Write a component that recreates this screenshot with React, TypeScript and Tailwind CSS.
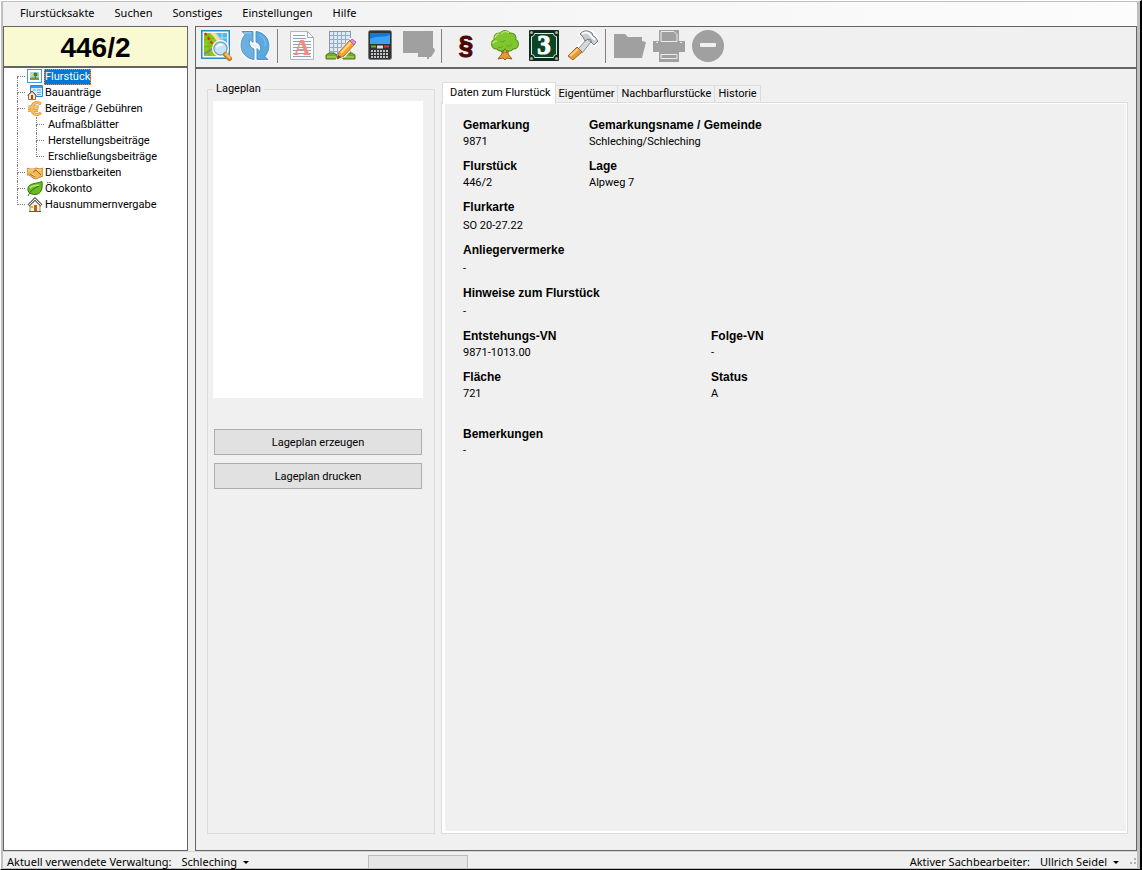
import { useState } from "react"
import type { ReactNode } from "react"

type TreeNode = {
  label: string;
  icon?: ReactNode;
  child?: boolean;
}

type Tool = {
  label: string;
  icon: ReactNode;
  disabled?: boolean;
}

const line = "border-dotted border-[#808080]"

function MapIcon() {
  return (
    <svg width="32" height="32" viewBox="0 0 32 32">
      <rect x="1" y="0" width="29" height="29" fill="#2a88c4" />
      <rect x="2.500" y="1.500" width="26" height="26" fill="#f4fbff" />
      <rect x="4" y="3" width="23" height="23" fill="#6cc6f2" />
      <path d="M18 3h9v23h-4z" fill="#53b8ee" />
      <path d="M22 3v23M18 8h9M18 14h9" stroke="#a9e0fa" />
      <path d="M4 3h9c6 5 9 10 9 23H4z" fill="#8cc914" />
      <path d="M10 3h5c6 5 9 12 8 23h-3c0-10-3-17-10-23z" fill="#f7dfa8" />
      <path d="M4 10l10-2M4 17l13-2M9 4v22" stroke="#74b512" />
      <path d="M4 24l8-5 6-3" stroke="#7d8790" strokeWidth="1.500" fill="none" />
      <path d="M5 3l10 15" stroke="#e3231b" strokeWidth="2" strokeDasharray="3 2" />
      <circle cx="20.500" cy="18.500" r="7" fill="#b9e0fb" stroke="#fff" strokeWidth="3" />
      <circle cx="20.500" cy="18.500" r="6.500" fill="#c3e6fc" stroke="#8ea2b4" strokeWidth="1.500" />
      <path d="M16 18c1-4 5-5 8-3-2 0-5 1-8 3z" fill="#fff" />
      <path d="M25.500 24.500l4 4" stroke="#c07a22" strokeWidth="5" strokeLinecap="round" />
      <path d="M26 24l3.500 3.500" stroke="#f6bf5c" strokeWidth="3" strokeLinecap="round" />
    </svg>
  )
}

function RefreshIcon() {
  const arrow = "M3 1.500h11v11l-3-3c-1.500 4-.5 7.500 4 9.500v10.500C3 28-2 15 6 4.500z"
  return (
    <svg width="32" height="32" viewBox="0 0 32 32" strokeLinejoin="round">
      <g fill="#fff" stroke="#fff" strokeWidth="3">
        <path d={arrow} />
        <path d={arrow} transform="rotate(180 16 15.500)" />
      </g>
      <g stroke="#4a93c8">
        <path d={arrow} fill="#6ab1e2" />
        <path d={arrow} fill="#5ba9de" transform="rotate(180 16 15.500)" />
      </g>
      <path d="M5 3h7" fill="none" stroke="#9dd0f0" />
      <path d="M20 5c5 2 7 6 6 11" fill="none" stroke="#8ac5ec" />
    </svg>
  )
}

function DocumentIcon() {
  return (
    <svg width="32" height="32" viewBox="0 0 32 32">
      <path d="M4.500 1.500h17l6 6v22h-23z" fill="#f9fbfd" stroke="#b3b7ba" />
      <path d="M21.500 1.500v6h6z" fill="#fff" stroke="#a5a9ad" />
      <path d="M7 5.500h12M7 8.500h13M7 11.500h18M7 14.500h18M7 17.500h18M7 20.500h18M7 23.500h18M7 26.500h18" stroke="#8fa1b5" />
      <text x="16" y="25" textAnchor="middle" fontFamily="Liberation Serif, serif" fontWeight="bold" fontSize="23" fill="#f58a80">A</text>
    </svg>
  )
}

function SurveyIcon() {
  return (
    <svg width="32" height="32" viewBox="0 0 32 32">
      <rect x="4.500" y="1.500" width="21" height="24" fill="#dce9f6" stroke="#8a99aa" />
      <path d="M8.500 2v23M12.500 2v23M16.500 2v23M20.500 2v23M5 5.500h20M5 9.500h20M5 13.500h20M5 17.500h20M5 21.500h20" stroke="#94acc8" />
      <path d="M1 29v-4l3-2h5l3 2v4zM18 29v-4l3-2h6l3 2v4z" fill="#77aa2b" stroke="#4f7b16" />
      <path d="M2 27h9M19 27h10" stroke="#99c94b" strokeWidth="2" />
      <path d="M12 29l3-8L26 9l5 4-11 13z" fill="#fff" stroke="#fff" strokeWidth="2" />
      <path d="M12 29l2-7 11-12 5 4-11 12z" fill="#f5a12b" stroke="#b86e1d" />
      <path d="M16 23l10-11" stroke="#ffd98b" strokeWidth="2" />
      <path d="M25 11l2-2 4 3-2 3z" fill="#d992cf" stroke="#a764a0" />
      <path d="M12 29l1-4 3 2z" fill="#6b4525" />
    </svg>
  )
}

function PhoneIcon() {
  return (
    <svg width="32" height="32" viewBox="0 0 32 32">
      <rect x="4.500" y=".5" width="23" height="29" rx="2" fill="#303234" stroke="#777b7e" />
      <rect x="6" y="3" width="20" height="11" fill="#1579d2" />
      <path d="M6 9c8-4 14-1 20-4v9H6z" fill="#3ea2ef" />
      <path d="M7 16.500h5" stroke="#5abb2c" strokeWidth="2" />
      <path d="M20 16.500h5" stroke="#e03a2b" strokeWidth="2" />
      <path d="M13 17h6" stroke="#dadddf" strokeWidth="3" />
      <path d="M7 21h18M7 24h18M7 27h18" stroke="#c2c5c7" strokeWidth="2" strokeDasharray="2 1" />
    </svg>
  )
}

function NoteIcon() {
  return (
    <svg width="32" height="32" viewBox="0 0 32 32" fill="#a0a0a0">
      <path d="M0 1h30v17h1l1 3-4 6h-2v2h-2v-2h-9v-4H0z" />
    </svg>
  )
}

function ParagraphIcon() {
  return (
    <svg width="32" height="32" viewBox="0 0 32 32">
      <text x="16" y="24" textAnchor="middle" fontFamily="Liberation Sans, sans-serif" fontWeight="bold" fontSize="26" fill="#4d0505" stroke="#4d0505">§</text>
    </svg>
  )
}

function TreeIcon() {
  return (
    <svg width="32" height="32" viewBox="0 0 32 32">
      <path d="M13 15h6v9l4 5-5-1-2 2-2-2-5 1 4-5z" fill="#e69b37" stroke="#9b5b16" />
      <path d="M10 18l5 5M22 18l-5 5" stroke="#b06b1f" strokeWidth="2" />
      <g fill="#4b9118">
        <circle cx="7.500" cy="14" r="5.500" />
        <circle cx="24.500" cy="14" r="5.500" />
        <circle cx="12" cy="16" r="5.500" />
        <circle cx="20" cy="16" r="5.500" />
        <circle cx="10" cy="8" r="5.500" />
        <circle cx="22" cy="8" r="5.500" />
        <circle cx="16" cy="6" r="6" />
      </g>
      <g fill="#80c62f">
        <circle cx="7.500" cy="14" r="4.500" />
        <circle cx="24.500" cy="14" r="4.500" />
        <circle cx="12" cy="16" r="4.500" />
        <circle cx="20" cy="16" r="4.500" />
        <circle cx="10" cy="8" r="4.500" />
        <circle cx="22" cy="8" r="4.500" />
        <circle cx="16" cy="6" r="5" />
        <circle cx="16" cy="12" r="6" />
      </g>
      <path d="M12 4c2-3 6-3 8-1M6 8c0-2 2-4 4-4M4 14c0-2 2-3 4-3" fill="none" stroke="#b6e667" strokeWidth="1.500" />
      <path d="M11 11c2 2 4 1 5-1M17 15c2 2 5 1 6-1M9 17c1 1 3 1 5-1" fill="none" stroke="#5ba51f" />
    </svg>
  )
}

function HouseNumberIcon() {
  return (
    <svg width="32" height="32" viewBox="0 0 32 32">
      <rect x="1" y="0" width="30" height="31" rx="1" fill="#0b2d1b" />
      <path d="M6.500 3.500h19c0 2 1 3 3 3v18c-2 0-3 1-3 3h-19c0-2-1-3-3-3v-18c2 0 3-1 3-3z" fill="#0b4426" stroke="#dce8df" />
      <g fill="#b7aaa0">
        <circle cx="3.500" cy="2.500" r="1.500" />
        <circle cx="28.500" cy="2.500" r="1.500" />
        <circle cx="3.500" cy="28.500" r="1.500" />
        <circle cx="28.500" cy="28.500" r="1.500" />
      </g>
      <text x="16" y="24" textAnchor="middle" fontFamily="Liberation Serif, serif" fontWeight="bold" fontSize="27" fill="#fff" stroke="#fff">3</text>
    </svg>
  )
}

function HammerIcon() {
  return (
    <svg width="32" height="32" viewBox="0 0 32 32" strokeLinejoin="round">
      <path d="M2 26L20 7l-8-2 4-4h9l3 4 3 6-3 5-5-4L7 30z" fill="#fff" stroke="#fff" strokeWidth="2" />
      <path d="M11 19L20 9l4 3-9 11z" fill="#d5d9dd" stroke="#858c94" />
      <path d="M1 26l9-9 5 5-9 8z" fill="#e69a35" stroke="#a2611b" />
      <path d="M3 26l8-7" stroke="#ffd188" strokeWidth="2" />
      <path d="M13 4c3-4 8-4 12-1l1 3 2 1 3 4-4 4-3-3v-2l-3-1-3 2-2-4z" fill="#c8cdd2" stroke="#737a83" />
      <path d="M15 4c3-2 6-2 8 1l5 5" fill="none" stroke="#f8fafc" strokeWidth="2" />
    </svg>
  )
}

function FolderIcon() {
  return (
    <svg width="32" height="32" viewBox="0 0 32 32" fill="#a0a0a0">
      <path d="M0 4h11l3 3h14v4l4 1-4 16H0z" />
    </svg>
  )
}

function PrinterIcon() {
  return (
    <svg width="32" height="32" viewBox="0 0 32 32">
      <path d="M6 0h20v11h6v11h-6v10H6V22H0V11h6z" fill="#a0a0a0" />
      <path d="M8 1.500h13l3 3v7H8zM8 24.500h16v4H8z" fill="#a0a0a0" stroke="#ededed" />
      <path d="M3 12.500h2M27 12.500h2" stroke="#ededed" />
    </svg>
  )
}

function MinusIcon() {
  return (
    <svg width="32" height="32" viewBox="0 0 32 32">
      <circle cx="16" cy="16" r="16" fill="#a0a0a0" />
      <rect x="8" y="13" width="16" height="4" rx="1" fill="#f0f0f0" />
    </svg>
  )
}

function PictureGlyph() {
  return (
    <svg width="16" height="16" viewBox="0 0 16 16">
      <rect x=".5" y=".5" width="14" height="13" fill="#fff" stroke="#39a0dc" />
      <rect x="3" y="3" width="9" height="8" fill="#9bd2f6" />
      <circle cx="5" cy="5" r="1.500" fill="#ffd84a" />
      <path d="M3 9c3-1 6-1 9 0v2H3z" fill="#7d9a2a" />
      <path d="M8.500 5v5" stroke="#a0681f" />
      <circle cx="8.500" cy="5.500" r="2" fill="#3f7f23" />
    </svg>
  )
}

function PermitGlyph() {
  return (
    <svg width="16" height="16" viewBox="0 0 16 16">
      <path d="M3.500.5h12v11h-12z" fill="#d8edfb" stroke="#2e86cc" />
      <path d="M4 2h11" stroke="#3b9ae0" strokeWidth="2" />
      <path d="M6 5h3M10 5h4M10 7.500h4M10 9.500h4" stroke="#5aaae4" />
      <path d="M1.500 10L5 6.500 8.500 10v4.500h-7z" fill="#fae7c7" stroke="#ab6b3c" />
      <path d="M.5 10.500L5 6l4.500 4.500" fill="none" stroke="#8c4b30" />
      <rect x="4" y="10" width="2" height="4" fill="#9b4b22" />
    </svg>
  )
}

function EuroGlyph() {
  return (
    <svg width="16" height="16" viewBox="0 0 16 16" fill="none">
      <path d="M14 3C9 0 5 2 5 7.500S9 15 14 12M1 6h11M1 9.500h10" stroke="#d08a30" strokeWidth="3" />
      <path d="M14 3C9 0 5 2 5 7.500S9 15 14 12M1 6h11M1 9.500h10" stroke="#f7bd62" strokeWidth="2" />
    </svg>
  )
}

function HandshakeGlyph() {
  return (
    <svg width="16" height="16" viewBox="0 0 16 16">
      <path d="M0 3l3 1 4 0 2-1 4 1 3-1v8l-3 1-4 2-3-1-4-3H0z" fill="#f4b758" stroke="#c58a3c" />
      <path d="M6 7l3-2 5 5M3 9l5 3" fill="none" stroke="#a3641c" />
      <path d="M1 5h6M10 5h4M5 9l3 2" stroke="#ffe4a8" />
    </svg>
  )
}

function LeafGlyph() {
  return (
    <svg width="16" height="16" viewBox="0 0 16 16">
      <path d="M15 .5c1 7.500-1 13-7 13-4 0-8-2-7-6.500C2 2 9 3 15 .5z" fill="#6cba22" stroke="#32790f" />
      <path d="M1 15c2-5 6-8 11-10" fill="none" stroke="#2e710e" />
      <path d="M3 7c2-3 6-2 9-3" fill="none" stroke="#b4e868" strokeWidth="1.500" />
    </svg>
  )
}

function HouseGlyph() {
  return (
    <svg width="16" height="16" viewBox="0 0 16 16">
      <path d="M3 7l5-5 5 5v7.500H3z" fill="#fdf0d5" stroke="#a58462" />
      <path d="M1.500 8.500L8 2l6.500 6.500" fill="none" stroke="#666" strokeWidth="3" />
      <path d="M1.500 8.500L8 2l6.500 6.500" fill="none" stroke="#eee" />
      <rect x="7" y="8" width="3" height="6" fill="#b76421" />
      <path d="M4 10h2" stroke="#f2a72c" strokeWidth="2" />
      <path d="M2 14.500h12" stroke="#73592e" />
    </svg>
  )
}

const menu = ["Flurstücksakte", "Suchen", "Sonstiges", "Einstellungen", "Hilfe"]

const nodes: TreeNode[] = [
  { label: "Flurstück", icon: <PictureGlyph /> },
  { label: "Bauanträge", icon: <PermitGlyph /> },
  { label: "Beiträge / Gebühren", icon: <EuroGlyph /> },
  { label: "Aufmaßblätter", child: true },
  { label: "Herstellungsbeiträge", child: true },
  { label: "Erschließungsbeiträge", child: true },
  { label: "Dienstbarkeiten", icon: <HandshakeGlyph /> },
  { label: "Ökokonto", icon: <LeafGlyph /> },
  { label: "Hausnummernvergabe", icon: <HouseGlyph /> },
]

const toolGroups: Tool[][] = [
  [
    { label: "Karte", icon: <MapIcon /> },
    { label: "Aktualisieren", icon: <RefreshIcon /> },
  ],
  [
    { label: "Dokument", icon: <DocumentIcon /> },
    { label: "Aufmaß", icon: <SurveyIcon /> },
    { label: "Rechner", icon: <PhoneIcon /> },
    { label: "Notiz", icon: <NoteIcon />, disabled: true },
  ],
  [
    { label: "Satzung", icon: <ParagraphIcon /> },
    { label: "Baum", icon: <TreeIcon /> },
    { label: "Hausnummer", icon: <HouseNumberIcon /> },
    { label: "Werkzeug", icon: <HammerIcon /> },
  ],
  [
    { label: "Ordner", icon: <FolderIcon />, disabled: true },
    { label: "Drucken", icon: <PrinterIcon />, disabled: true },
    { label: "Entfernen", icon: <MinusIcon />, disabled: true },
  ],
]

const tabs = ["Daten zum Flurstück", "Eigentümer", "Nachbarflurstücke", "Historie"]

function Field({ label, value, loose, className }: { label: string; value: string; loose?: boolean; className?: string }) {
  return (
    <div className={className}>
      <dt className="text-xs font-['Liberation_Sans',sans-serif] font-bold leading-4">{label}</dt>
      <dd className={loose ? "mt-[3px]" : "mt-px"}>{value}</dd>
    </div>
  )
}

function Branch({ first, last }: { first?: boolean; last?: boolean }) {
  return (
    <span className="w-2 h-4 flex flex-col shrink-0">
      <span className={`h-2 border-b ${first ? "" : "border-l"} ${line}`} />
      <span className={`h-2 ${last ? "" : "border-l"} ${line}`} />
    </span>
  )
}

function Caret() {
  return (
    <svg width="6" height="3" viewBox="0 0 6 3">
      <path d="M0 0h6L3 3z" fill="#000" />
    </svg>
  )
}

export default function App() {
  const [node, setNode] = useState("Flurstück")
  const [tab, setTab] = useState(0)

  return (
    <div className="h-screen flex flex-col overflow-hidden bg-[#f0f0f0] text-black text-[11px] leading-4 font-[Roboto,sans-serif] border-t border-l border-t-white border-l-white border-r-2 border-r-black border-b border-b-black">
      <div className="flex-1 min-h-0 flex flex-col border-t border-l-2 border-r-3 border-b border-[#bfbfbf]">
        <nav className="h-6 shrink-0 flex items-center pl-[7px] pb-0.5 text-[11px] font-['Noto_Sans',sans-serif] bg-linear-to-r from-[#f0f0f0] to-[#fcfcfc]">
          {menu.map(item => (
            <button key={item} className="px-2.5">{item}</button>
          ))}
        </nav>

        <div className="flex-1 min-h-0 flex gap-[7px]">
          <aside className="w-[185px] shrink-0 flex flex-col border border-[#646464] bg-white">
            <h1 className="h-[41px] shrink-0 flex items-center justify-center pt-0.5 border-b-2 border-[#646464] bg-[#fafad2] text-[28px] font-bold font-['Liberation_Sans',sans-serif]">446/2</h1>
            <ul className="pl-[13px] pt-px">
              {nodes.map((n, i) => (
                <li key={n.label} className="h-4 flex items-center">
                  {n.child ? (
                    <>
                      <span className={`w-[19px] h-4 border-l ${line}`} />
                      <Branch last={i === 5} />
                    </>
                  ) : (
                    <>
                      <Branch first={i === 0} last={i === nodes.length - 1} />
                      <span className="w-[17px] h-4 ml-0.5 shrink-0">{n.icon}</span>
                    </>
                  )}
                  <button
                    onClick={() => setNode(n.label)}
                    className={`h-4 leading-[14px] border border-dotted whitespace-nowrap ${n.child ? "ml-[3px]" : ""} ${n.label === node ? "bg-[#0078d7] text-white border-[#ff8728]" : "border-transparent"}`}
                  >
                    {n.label}
                  </button>
                </li>
              ))}
            </ul>
          </aside>

          <main className="flex-1 min-w-0 flex flex-col border border-[#646464]">
            <div role="toolbar" className="h-[42px] shrink-0 flex items-center pb-0.5 border-b-2 border-[#646464]">
              {toolGroups.map((group, i) => (
                <div key={i} className="flex items-center">
                  {i > 0 && <span className="h-[34px] border-l border-[#808080] ml-[3px] mr-1" />}
                  {group.map(tool => (
                    <button key={tool.label} aria-label={tool.label} disabled={tool.disabled} className="w-[39px] flex justify-center">
                      {tool.icon}
                    </button>
                  ))}
                </div>
              ))}
            </div>

            <div className="flex-1 min-h-0 flex gap-1.5 pt-[13px] pr-2 pb-4 pl-[11px]">
              <fieldset className="w-[228px] shrink-0 border border-[#dcdcdc] pl-[5px] pr-[11px]">
                <legend className="px-[3px] leading-[14px]">Lageplan</legend>
                <div className="h-[297px] mt-[5px] bg-white" />
                <div className="flex flex-col gap-2 mt-[31px] px-px">
                  <button className="h-[26px] pt-px border border-[#adadad] bg-[#e1e1e1]">Lageplan erzeugen</button>
                  <button className="h-[26px] pt-px border border-[#adadad] bg-[#e1e1e1]">Lageplan drucken</button>
                </div>
              </fieldset>

              <section className="flex-1 min-w-0 flex flex-col">
                <div role="tablist" className="h-5 shrink-0 flex items-end pl-px">
                  {tabs.map((t, i) => (
                    <button
                      key={t}
                      role="tab"
                      aria-selected={tab === i}
                      onClick={() => setTab(i)}
                      className={tab === i
                        ? "relative h-[22px] -mb-0.5 pl-[7px] pr-1 pb-0.5 border border-b-0 border-[#dcdcdc] bg-white"
                        : "h-[17px] px-[3px] border-t border-r border-[#dcdcdc]"}
                    >
                      {t}
                    </button>
                  ))}
                </div>
                <div role="tabpanel" className="flex-1 border border-[#dcdcdc]">
                  <div className="h-full border border-l-3 border-b-2 border-white pt-[13px] pl-[18px]">
                    {tab === 0 && (
                      <dl className="grid grid-cols-[126px_122px_1fr] gap-y-2">
                        <Field label="Gemarkung" value="9871" />
                        <Field label="Gemarkungsname / Gemeinde" value="Schleching/Schleching" className="col-span-2" />
                        <Field label="Flurstück" value="446/2" />
                        <Field label="Lage" value="Alpweg 7" className="col-span-2" />
                        <Field label="Flurkarte" value="SO 20-27.22" loose className="col-span-3" />
                        <Field label="Anliegervermerke" value="-" loose className="col-span-3" />
                        <Field label="Hinweise zum Flurstück" value="-" loose className="col-span-3" />
                        <Field label="Entstehungs-VN" value="9871-1013.00" className="col-span-2" />
                        <Field label="Folge-VN" value="-" />
                        <Field label="Fläche" value="721" className="col-span-2" />
                        <Field label="Status" value="A" />
                        <Field label="Bemerkungen" value="-" className="col-span-3 mt-4" />
                      </dl>
                    )}
                  </div>
                </div>
              </section>
            </div>
          </main>
        </div>

        <footer className="h-[17px] shrink-0 flex items-start pt-[3px] pl-1 border-t border-[#d7d7d7] text-[11px] leading-[14px] font-['Noto_Sans',sans-serif]">
          <div className="w-[361px] flex gap-2.5">
            <span>Aktuell verwendete Verwaltung:</span>
            <button className="flex items-center gap-1.5">Schleching <Caret /></button>
          </div>
          <div role="progressbar" aria-label="Fortschritt" className="w-[100px] h-[13px] border border-b-0 border-[#bcbcbc] bg-[#e6e6e6]" />
          <div className="ml-auto flex gap-2.5">
            <span>Aktiver Sachbearbeiter:</span>
            <button className="flex items-center gap-1.5">Ullrich Seidel <Caret /></button>
            <svg className="mt-0.5" width="8" height="10" viewBox="0 0 8 10" fill="#b0b0b0">
              <path d="M5 1h2v2H5zM5 5h2v2H5zM1 5h2v2H1z" />
            </svg>
          </div>
        </footer>
      </div>
    </div>
  )
}
